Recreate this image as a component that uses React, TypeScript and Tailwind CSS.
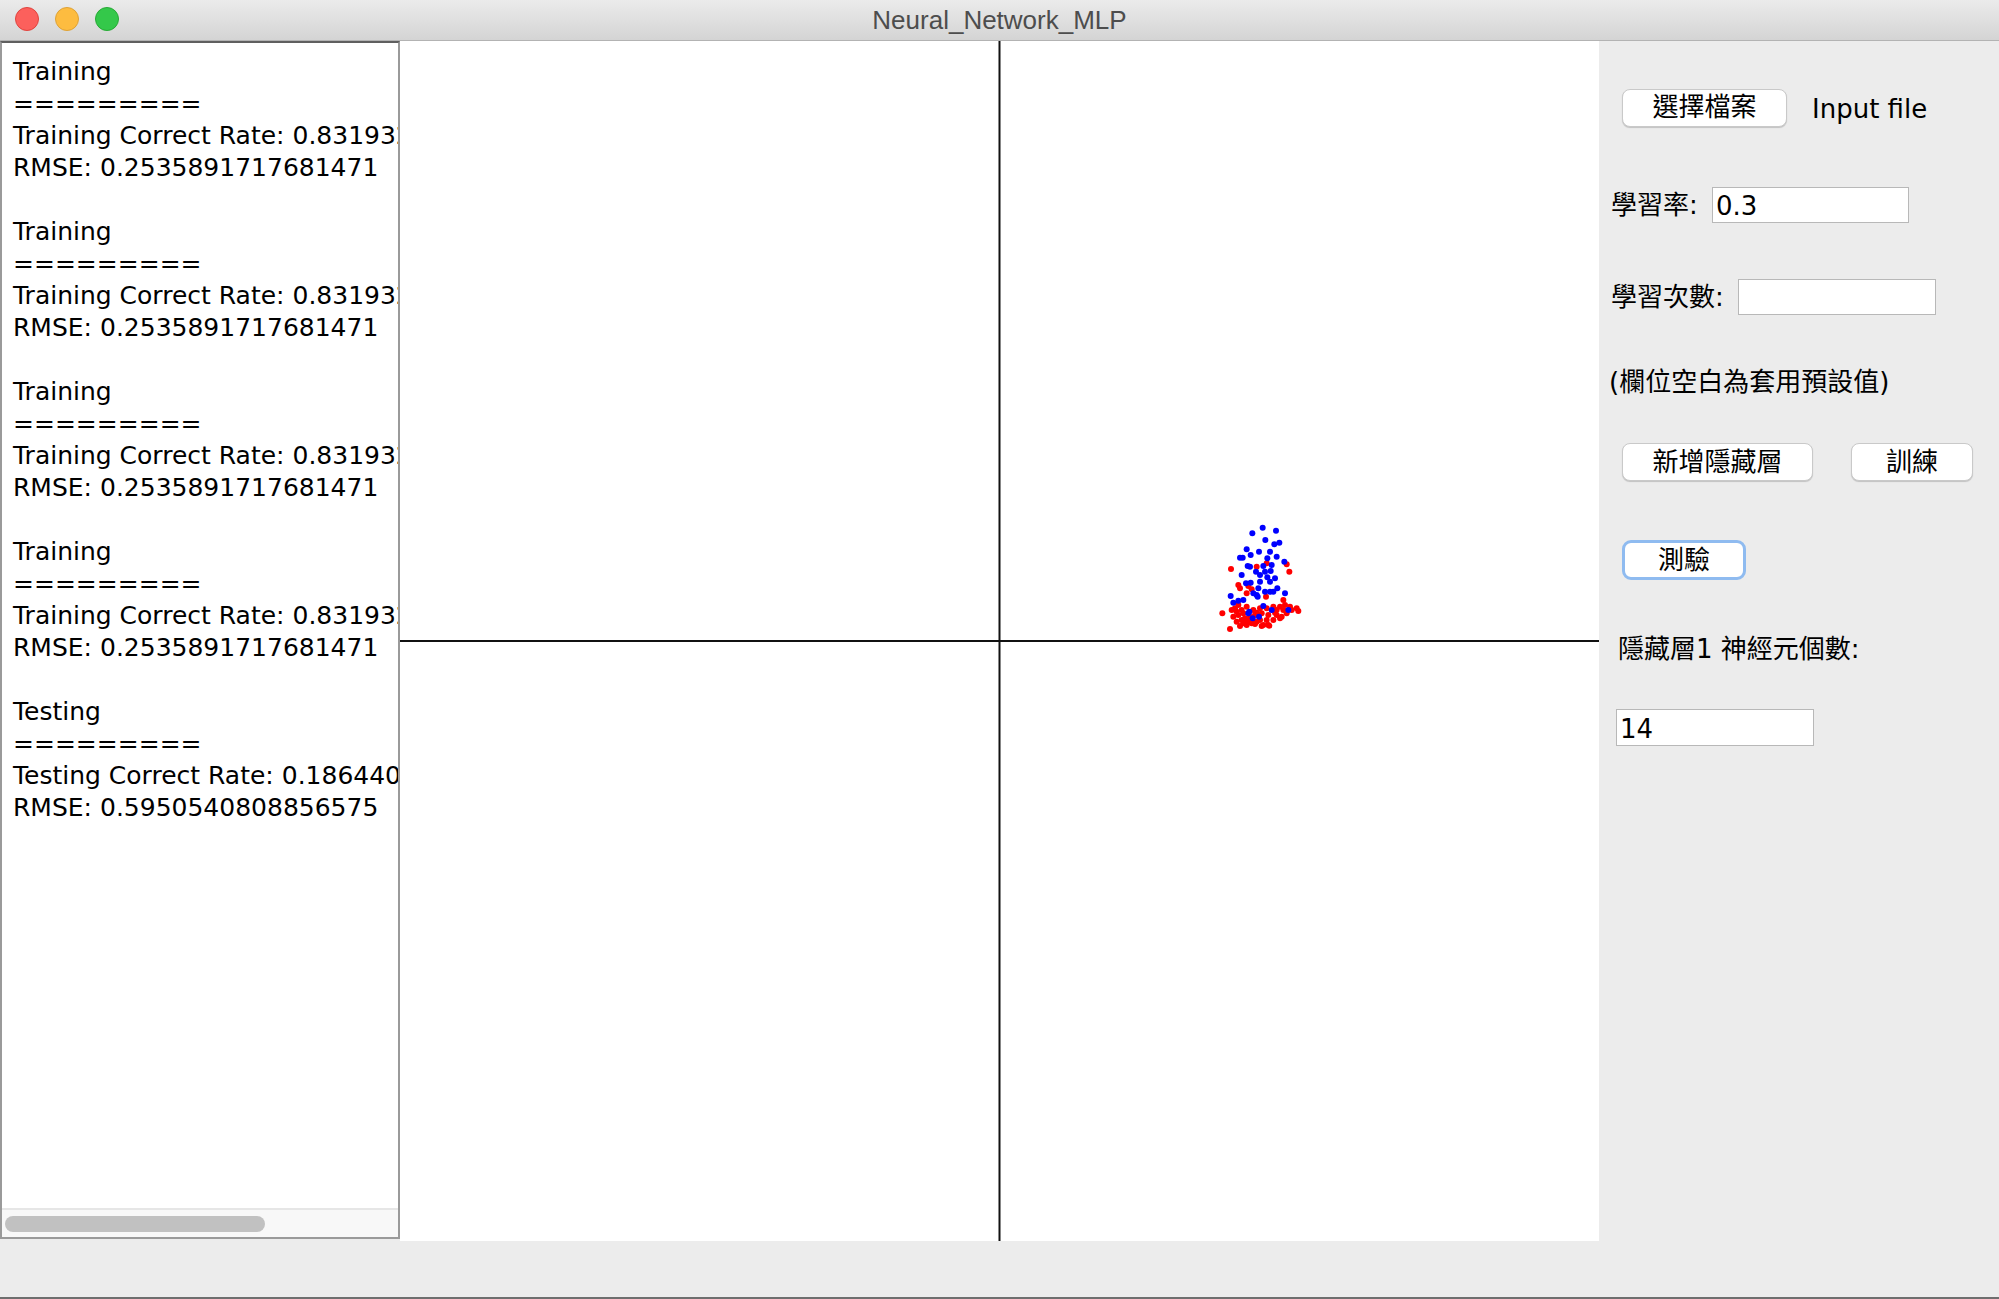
import React from "react";

const blue: [number, number][] = [
  [248, 83], [217, 100], [288, 92], [256, 120], [283, 133], [298, 128], [200, 148], [237, 155],
  [270, 155], [212, 165], [180, 173], [188, 173], [262, 175], [290, 170], [313, 185], [203, 198],
  [210, 200], [250, 198], [275, 195], [228, 215], [255, 215], [272, 213], [185, 225], [240, 225],
  [262, 232], [285, 235], [198, 250], [212, 248], [240, 245], [270, 245], [235, 265], [292, 265],
  [255, 275], [270, 275], [280, 275], [230, 285], [220, 280], [315, 280], [152, 288], [175, 302],
  [190, 300], [160, 308], [233, 290], [250, 318], [275, 330], [325, 330], [208, 335], [218, 355],
  [237, 350], [205, 340],
];

const red: [number, number][] = [
  [153, 207], [230, 200], [260, 190], [320, 193], [328, 215], [175, 255], [180, 265], [205, 258],
  [215, 268], [200, 280], [258, 290], [310, 300], [165, 325], [185, 330], [200, 320], [220, 330],
  [240, 325], [260, 325], [280, 320], [300, 320], [315, 315], [330, 320], [350, 325], [355, 333],
  [127, 340], [160, 350], [175, 345], [195, 355], [210, 350], [225, 345], [245, 340], [265, 345],
  [290, 345], [305, 350], [320, 340], [170, 365], [190, 370], [200, 375], [215, 370], [230, 365],
  [250, 375], [265, 375], [280, 360], [300, 355], [150, 387], [180, 378], [225, 372], [245, 378],
  [268, 377], [195, 362], [155, 330], [290, 330], [170, 335], [185, 360], [310, 330], [240, 360],
  [260, 360], [175, 315], [230, 338], [285, 338], [205, 365], [335, 330], [190, 340],
];

const log = [
  ["Training", "Training Correct Rate: 0.831932773109244", "RMSE: 0.2535891717681471"],
  ["Training", "Training Correct Rate: 0.831932773109244", "RMSE: 0.2535891717681471"],
  ["Training", "Training Correct Rate: 0.831932773109244", "RMSE: 0.2535891717681471"],
  ["Training", "Training Correct Rate: 0.831932773109244", "RMSE: 0.2535891717681471"],
  ["Testing", "Testing Correct Rate: 0.18644067796610", "RMSE: 0.5950540808856575"],
];

const font = { fontFamily: '"DejaVu Sans", "Noto Sans CJK TC", sans-serif' };

function MacButton({ label, width, focused }: { label: string; width: string; focused?: boolean }) {
  return (
    <button
      className={
        focused
          ? `${width} h-[40px] rounded-[9px] bg-white border-[3px] border-[#8fbbf0] text-[26px] text-black flex items-center justify-center`
          : `${width} h-[38px] rounded-[8px] bg-white border border-[#c9c9c9] shadow-[0_1px_1px_rgba(0,0,0,0.18)] text-[26px] text-black flex items-center justify-center`
      }
    >
      {label}
    </button>
  );
}

export default function App() {
  return (
    <div className="w-[1999px] h-[1299px] overflow-hidden bg-[#ececec] flex flex-col text-black" style={font}>
      {/* title bar */}
      <div className="h-[41px] shrink-0 relative flex items-center justify-center bg-gradient-to-b from-[#ebebeb] to-[#d4d4d4] border-b border-[#b3b3b3]">
        <div className="absolute left-[15px] top-[7px] flex gap-[16px]">
          <span className="w-[24px] h-[24px] rounded-full bg-[#fc605c] border border-[#e0443e]" />
          <span className="w-[24px] h-[24px] rounded-full bg-[#fdbc40] border border-[#dea236]" />
          <span className="w-[24px] h-[24px] rounded-full bg-[#34c84a] border border-[#27aa35]" />
        </div>
        <span className="text-[26px] text-[#4d4d4d]" style={{ fontFamily: '"Liberation Sans", sans-serif' }}>
          Neural_Network_MLP
        </span>
      </div>

      {/* main row */}
      <div className="flex h-[1200px] shrink-0">
        {/* log pane */}
        <div className="w-[400px] h-[1198px] shrink-0 flex flex-col bg-white border-2 border-[#9a9a9a] border-t-[#5f5f5f]">
          <div className="flex-1 overflow-hidden pl-[11px] pt-[13px] text-[25px] leading-[32px] whitespace-pre">
            {log.map((b, i) => (
              <div key={i} className="mb-[32px]">
                <div>{b[0]}</div>
                <div>=========</div>
                <div>{b[1]}</div>
                <div>{b[2]}</div>
              </div>
            ))}
          </div>
          <div className="h-[29px] shrink-0 bg-[#f8f8f8] border-t-2 border-[#e6e6e6] flex items-center px-[3px]">
            <div className="w-[260px] h-[16px] rounded-full bg-[#c1c1c1]" />
          </div>
        </div>

        {/* canvas */}
        <div className="w-[1199px] h-[1200px] shrink-0 bg-white">
          <svg width="1199" height="1200" viewBox="0 0 1199 1200">
            <line x1="599.5" y1="0" x2="599.5" y2="1200" stroke="#111" strokeWidth="2" />
            <line x1="0" y1="600" x2="1199" y2="600" stroke="#111" strokeWidth="2" />
            {red.map(([x, y], i) => (
              <circle key={"r" + i} cx={780 + x / 3} cy={459 + y / 3} r="3" fill="#ff0000" />
            ))}
            {blue.map(([x, y], i) => (
              <circle key={"b" + i} cx={780 + x / 3} cy={459 + y / 3} r="3" fill="#0000ff" />
            ))}
          </svg>
        </div>

        {/* controls */}
        <div className="w-[400px] shrink-0 flex flex-col text-[26px]">
          <div className="mt-[47px] h-[39px] flex items-center pl-[23px]">
            <MacButton label="選擇檔案" width="w-[165px]" />
            <span className="ml-[25px] pt-[4px]">Input file</span>
          </div>
          <div className="mt-[60px] h-[36px] flex items-center pl-[12px]">
            <span className="w-[101px]">學習率:</span>
            <div className="w-[197px] h-[36px] bg-white border border-[#b8b8b8] pl-[3px] pt-[2px] flex items-center">0.3</div>
          </div>
          <div className="mt-[56px] h-[36px] flex items-center pl-[12px]">
            <span className="w-[127px]">學習次數:</span>
            <div className="w-[198px] h-[36px] bg-white border border-[#b8b8b8]" />
          </div>
          <div className="mt-[51px] h-[32px] flex items-center pl-[10px]">(欄位空白為套用預設值)</div>
          <div className="mt-[45px] h-[38px] flex items-center pl-[23px] gap-[38px]">
            <MacButton label="新增隱藏層" width="w-[191px]" />
            <MacButton label="訓練" width="w-[122px]" />
          </div>
          <div className="mt-[59px] h-[40px] flex items-center pl-[23px]">
            <MacButton label="測驗" width="w-[124px]" focused />
          </div>
          <div className="mt-[53px] h-[32px] flex items-center pl-[19px]">隱藏層1 神經元個數:</div>
          <div className="mt-[44px] h-[37px] flex items-center pl-[17px]">
            <div className="w-[198px] h-[37px] bg-white border border-[#b8b8b8] pl-[3px] pt-[4px] flex items-center">14</div>
          </div>
        </div>
      </div>

      {/* bottom strip */}
      <div className="flex-1 bg-[#ececec]" />
      <div className="h-[2px] shrink-0 bg-[#6e6e6e]" />
    </div>
  );
}
